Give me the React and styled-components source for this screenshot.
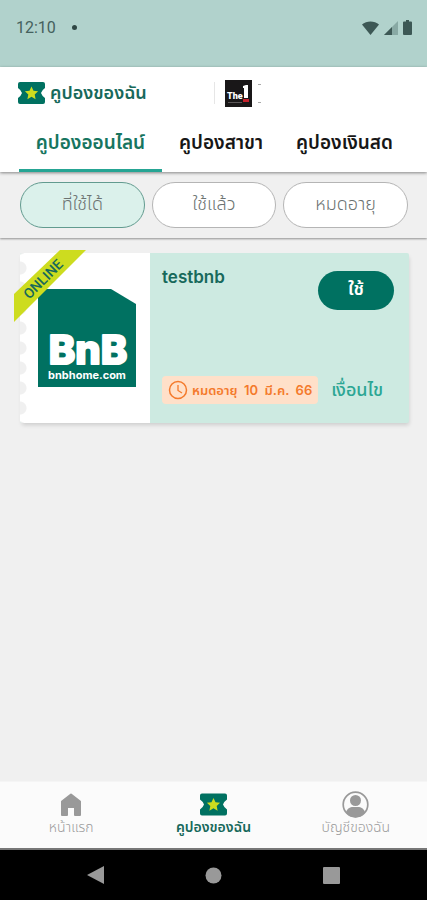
import React, { useState } from 'react'
import styled, { createGlobalStyle } from 'styled-components'

const GlobalStyle = createGlobalStyle`
    * {
        box-sizing: border-box;
    }
    body {
        margin: 0;
        background: #f0f0f0;
        font-family: "Inter", "Noto Sans Thai", "Noto Sans", "Liberation Sans", sans-serif;
    }
    button {
        margin: 0;
        padding: 0;
        border: none;
        background: none;
        font-family: inherit;
        cursor: pointer;
    }
`
const Screen = styled.div`
    display: flex;
    flex-direction: column;
    min-height: 100vh;
`
const StatusBar = styled.div`
    display: flex;
    align-items: center;
    justify-content: space-between;
    height: 67px;
    padding: 0 15px 12px 16px;
    background: #b1d2cc;
    color: #45615d;
    font-family: Roboto, sans-serif;
    font-size: 16px;
`
const StatusGroup = styled.div`
    display: flex;
    align-items: center;
    gap: ${props => props.$gap};
`
const Dot = styled.span`
    width: 5px;
    height: 5px;
    border-radius: 50%;
    background: #2f4744;
`
const Header = styled.header`
    position: relative;
    background: white;
    box-shadow: 0 1px 3px rgba(0, 0, 0, .45);
`
const BrandRow = styled.div`
    display: grid;
    grid-template-columns: 1fr 1fr;
    height: 52px;
    padding-left: 18px;
`
const Brand = styled.h1`
    display: flex;
    align-items: center;
    gap: 5px;
    margin: 0;
    color: #17695b;
    font-size: 18px;
    line-height: 24px;
    font-weight: 600;
`
const Partner = styled.div`
    display: flex;
    align-items: center;
    gap: 6px;
    margin-left: -9px;
`
const Divider = styled.span`
    width: 1px;
    height: 22px;
    margin-right: 4px;
    background: #e6e6e6;
`
const Tabs = styled.div`
    display: grid;
    grid-template-columns: 143fr 118fr 129fr;
    padding: 0 18px 0 19px;
`
const Tab = styled.button`
    height: 53px;
    padding-bottom: 3px;
    border-bottom: 3px solid ${props => props.$active ? '#26a594' : 'transparent'};
    color: ${props => props.$active ? '#17755f' : '#171717'};
    font-size: 19px;
    line-height: 24px;
    font-weight: 600;
    white-space: nowrap;
`
const Filters = styled.div`
    display: grid;
    grid-template-columns: repeat(3, 1fr);
    gap: 7px;
    padding: 10px 19px 10px 20px;
    background: #f0f0f0;
    box-shadow: 0 1px 2px rgba(0, 0, 0, .4);
`
const Filter = styled.button`
    height: 46px;
    padding-bottom: 3px;
    border: 1px solid ${props => props.$active ? '#629b8f' : '#b5b5b5'};
    border-radius: 23px;
    background: ${props => props.$active ? '#dbf1eb' : 'white'};
    color: #6c7372;
    font-size: 18px;
    line-height: 24px;
    font-weight: 300;
`
const Content = styled.main`
    flex: 1;
    padding: 15px 18px 15px 20px;
`
const Coupon = styled.article`
    position: relative;
    display: flex;
    height: 170px;
    border-radius: 2px;
    background: #cdeae1;
    box-shadow: 1px 3px 4px -1px rgba(0, 0, 0, .15);
`
const CouponArt = styled.div`
    display: flex;
    align-items: center;
    justify-content: center;
    width: 130px;
    padding-left: 4px;
    border-radius: 2px 0 0 2px;
    background:
        radial-gradient(circle at 0 50%, #f0f0f0 6px, transparent 7px) 0 5px / 10px 20px repeat-y,
        white;
`
const Ribbon = styled.div`
    position: absolute;
    top: -3px;
    left: -6px;
    width: 72px;
    height: 72px;
    padding-top: 21px;
    background: #cddc1f;
    clip-path: polygon(46px 0, 72px 0, 0 72px, 0 44px);

    > span {
        display: block;
        width: 58px;
        color: #17695b;
        font-family: Roboto, sans-serif;
        font-size: 14px;
        line-height: 16px;
        font-weight: 500;
        text-align: center;
        transform: rotate(-45deg);
    }
`
const CouponBody = styled.div`
    display: flex;
    flex: 1;
    flex-direction: column;
    justify-content: space-between;
    padding: 14px 15px 19px 12px;
`
const CouponRow = styled.div`
    display: flex;
    align-items: ${props => props.$align};
    justify-content: space-between;
`
const CouponTitle = styled.h2`
    margin: 0;
    color: #17695b;
    font-size: 17px;
    line-height: 20px;
    font-weight: 600;
`
const UseButton = styled.button`
    width: 76px;
    height: 39px;
    margin-top: 4px;
    padding-bottom: 3px;
    border-radius: 20px;
    background: #007161;
    color: white;
    font-size: 18px;
    line-height: 24px;
    font-weight: 600;
`
const Expiry = styled.p`
    display: flex;
    align-items: center;
    gap: 4px;
    height: 28px;
    margin: 0;
    padding: 0 6px;
    border-radius: 4px;
    background: #ffe0c9;
    color: #f47a2c;
    font-size: 13px;
    line-height: 20px;
    font-weight: 600;
    white-space: pre;
`
const TermsLink = styled.a`
    margin-right: 11px;
    color: #2ba694;
    font-size: 18px;
    line-height: 24px;
    font-weight: 500;
    text-decoration: none;
    white-space: nowrap;
`
const BottomNav = styled.nav`
    display: grid;
    grid-template-columns: repeat(3, 1fr);
    height: 67px;
    border-top: 1px solid #f5f5f5;
    background: #fbfbfb;
`
const NavLink = styled.a`
    display: flex;
    flex-direction: column;
    align-items: center;
    padding-top: 9px;
    color: ${props => props.$active ? '#17695b' : '#9b9b9b'};
    font-size: 14px;
    line-height: 18px;
    font-weight: ${props => props.$active ? 600 : 300};
    text-decoration: none;

    > svg {
        height: 27px;
    }
`
const SystemBar = styled.div`
    display: flex;
    align-items: center;
    justify-content: space-between;
    height: 52px;
    padding: 0 87px;
    border-top: 2px solid #777;
    background: black;
`

const TicketIcon = () => (
    <svg width="27" height="24" viewBox="0 0 27 24" aria-hidden="true">
        <path fill="#007161" d="M2 1h23a2 2 0 0 1 2 2v4q-3 2-4 5 1 3 4 5v4a2 2 0 0 1-2 2H2a2 2 0 0 1-2-2v-4q3-2 4-5-1-3-4-5V3a2 2 0 0 1 2-2z" />
        <path fill="#cddc1f" d="M13.500 5.500l2 4.300 4.600.5-3.400 3.200.9 4.700-4.100-2.400-4.100 2.400.9-4.700-3.400-3.200 4.600-.5z" />
    </svg>
)

const TheOneLogo = () => (
    <svg width="27" height="27" viewBox="0 0 27 27" role="img" aria-label="The 1">
        <rect width="27" height="27" fill="#191718" />
        <text x="2" y="19" fill="white" fontFamily="Roboto, sans-serif" fontSize="9" fontWeight="900">The</text>
        <path fill="white" d="M18 6l3-1h2v13h-4V8h-1z" />
        <path fill="#c5202b" d="M18 19h6v3h-6z" />
        <path stroke="#5a5657" d="M3 22.500h14" />
    </svg>
)

const PartnerMarks = () => (
    <svg width="4" height="21" viewBox="0 0 4 21" aria-hidden="true">
        <path stroke="#aaa" d="M0 1.500h3M0 19.500h3" />
    </svg>
)

const WifiIcon = () => (
    <svg width="17" height="14" viewBox="0 0 17 14" aria-hidden="true">
        <path fill="#3d5855" d="M0 3.500C4.500-.6 12.500-.6 17 3.500L8.500 14z" />
    </svg>
)

const SignalIcon = () => (
    <svg width="14" height="14" viewBox="0 0 14 14" aria-hidden="true">
        <path fill="#88a9a4" d="M14 0v14H0z" />
        <path fill="#3d5855" d="M8 6v8H0z" />
    </svg>
)

const BatteryIcon = () => (
    <svg width="9" height="15" viewBox="0 0 9 15" aria-hidden="true">
        <path fill="#3d5855" d="M3 0h3v1.500h2a1 1 0 0 1 1 1V14a1 1 0 0 1-1 1H1a1 1 0 0 1-1-1V2.500a1 1 0 0 1 1-1h2z" />
    </svg>
)

const BnbLogo = () => (
    <svg width="98" height="98" viewBox="0 0 98 98" role="img" aria-label="BnB bnbhome.com">
        <path fill="#007161" d="M0 0h73l25 15v83H0z" />
        <g fill="white" fontFamily="Inter, sans-serif" textAnchor="middle">
            <text x="50" y="75" fontSize="40" fontWeight="800" stroke="white" strokeWidth="2" strokeLinejoin="round">BnB</text>
            <text x="49" y="90" fontSize="11" fontWeight="700">bnbhome.com</text>
        </g>
    </svg>
)

const ClockIcon = () => (
    <svg width="20" height="20" viewBox="0 0 20 20" fill="none" stroke="#f47a2c" aria-hidden="true">
        <circle cx="10" cy="10" r="8.500" strokeWidth="1.500" />
        <path strokeWidth="1.300" d="M10 5v5.500l4 2.500" />
    </svg>
)

const HomeIcon = () => (
    <svg width="22" height="27" viewBox="0 0 22 27" aria-hidden="true">
        <path fill="#999" stroke="#999" strokeWidth="2" strokeLinejoin="round" d="M11 3.500l9 7V24h-5v-8H7v8H2V10.500z" />
    </svg>
)

const UserIcon = () => (
    <svg width="27" height="27" viewBox="0 0 27 27" aria-hidden="true">
        <circle cx="13.500" cy="13.500" r="12.300" fill="none" stroke="#999" strokeWidth="1.700" />
        <circle cx="13.500" cy="9.500" r="5.500" fill="#999" />
        <path fill="#999" d="M4 21.500c1-4 4-5.500 7-5.500h5c3 0 6 1.500 7 5.500-5 6.500-14 6.500-19 0z" />
    </svg>
)

const tabs = ['คูปองออนไลน์', 'คูปองสาขา', 'คูปองเงินสด']
const filters = ['ที่ใช้ได้', 'ใช้แล้ว', 'หมดอายุ']

const App = () => {
    const [tab, setTab] = useState(0)
    const [filter, setFilter] = useState(0)

    return (
        <Screen>
            <GlobalStyle />
            <StatusBar>
                <StatusGroup $gap="16px">
                    <span>12:10</span>
                    <Dot />
                </StatusGroup>
                <StatusGroup $gap="5px">
                    <WifiIcon />
                    <SignalIcon />
                    <BatteryIcon />
                </StatusGroup>
            </StatusBar>
            <Header>
                <BrandRow>
                    <Brand><TicketIcon />คูปองของฉัน</Brand>
                    <Partner>
                        <Divider />
                        <TheOneLogo />
                        <PartnerMarks />
                    </Partner>
                </BrandRow>
                <Tabs role="tablist">
                    {tabs.map((name, i) => (
                        <Tab key={name} role="tab" aria-selected={tab === i} $active={tab === i} onClick={() => setTab(i)}>{name}</Tab>
                    ))}
                </Tabs>
            </Header>
            <Filters>
                {filters.map((name, i) => (
                    <Filter key={name} aria-pressed={filter === i} $active={filter === i} onClick={() => setFilter(i)}>{name}</Filter>
                ))}
            </Filters>
            <Content>
                <Coupon>
                    <CouponArt><BnbLogo /></CouponArt>
                    <Ribbon><span>ONLINE</span></Ribbon>
                    <CouponBody>
                        <CouponRow $align="flex-start">
                            <CouponTitle>testbnb</CouponTitle>
                            <UseButton>ใช้</UseButton>
                        </CouponRow>
                        <CouponRow $align="center">
                            <Expiry><ClockIcon />หมดอายุ  10  มี.ค.  66</Expiry>
                            <TermsLink href="#terms">เงื่อนไข</TermsLink>
                        </CouponRow>
                    </CouponBody>
                </Coupon>
            </Content>
            <BottomNav>
                <NavLink href="#home"><HomeIcon />หน้าแรก</NavLink>
                <NavLink href="#coupons" $active><TicketIcon />คูปองของฉัน</NavLink>
                <NavLink href="#account"><UserIcon />บัญชีของฉัน</NavLink>
            </BottomNav>
            <SystemBar>
                <svg width="17" height="18" viewBox="0 0 17 18" aria-hidden="true"><path fill="#999" d="M17 0v18L0 9z" /></svg>
                <svg width="17" height="17" viewBox="0 0 17 17" aria-hidden="true"><circle cx="8.500" cy="8.500" r="8" fill="#999" /></svg>
                <svg width="17" height="17" viewBox="0 0 17 17" aria-hidden="true"><rect width="17" height="17" rx="1" fill="#999" /></svg>
            </SystemBar>
        </Screen>
    )
}

export default App
